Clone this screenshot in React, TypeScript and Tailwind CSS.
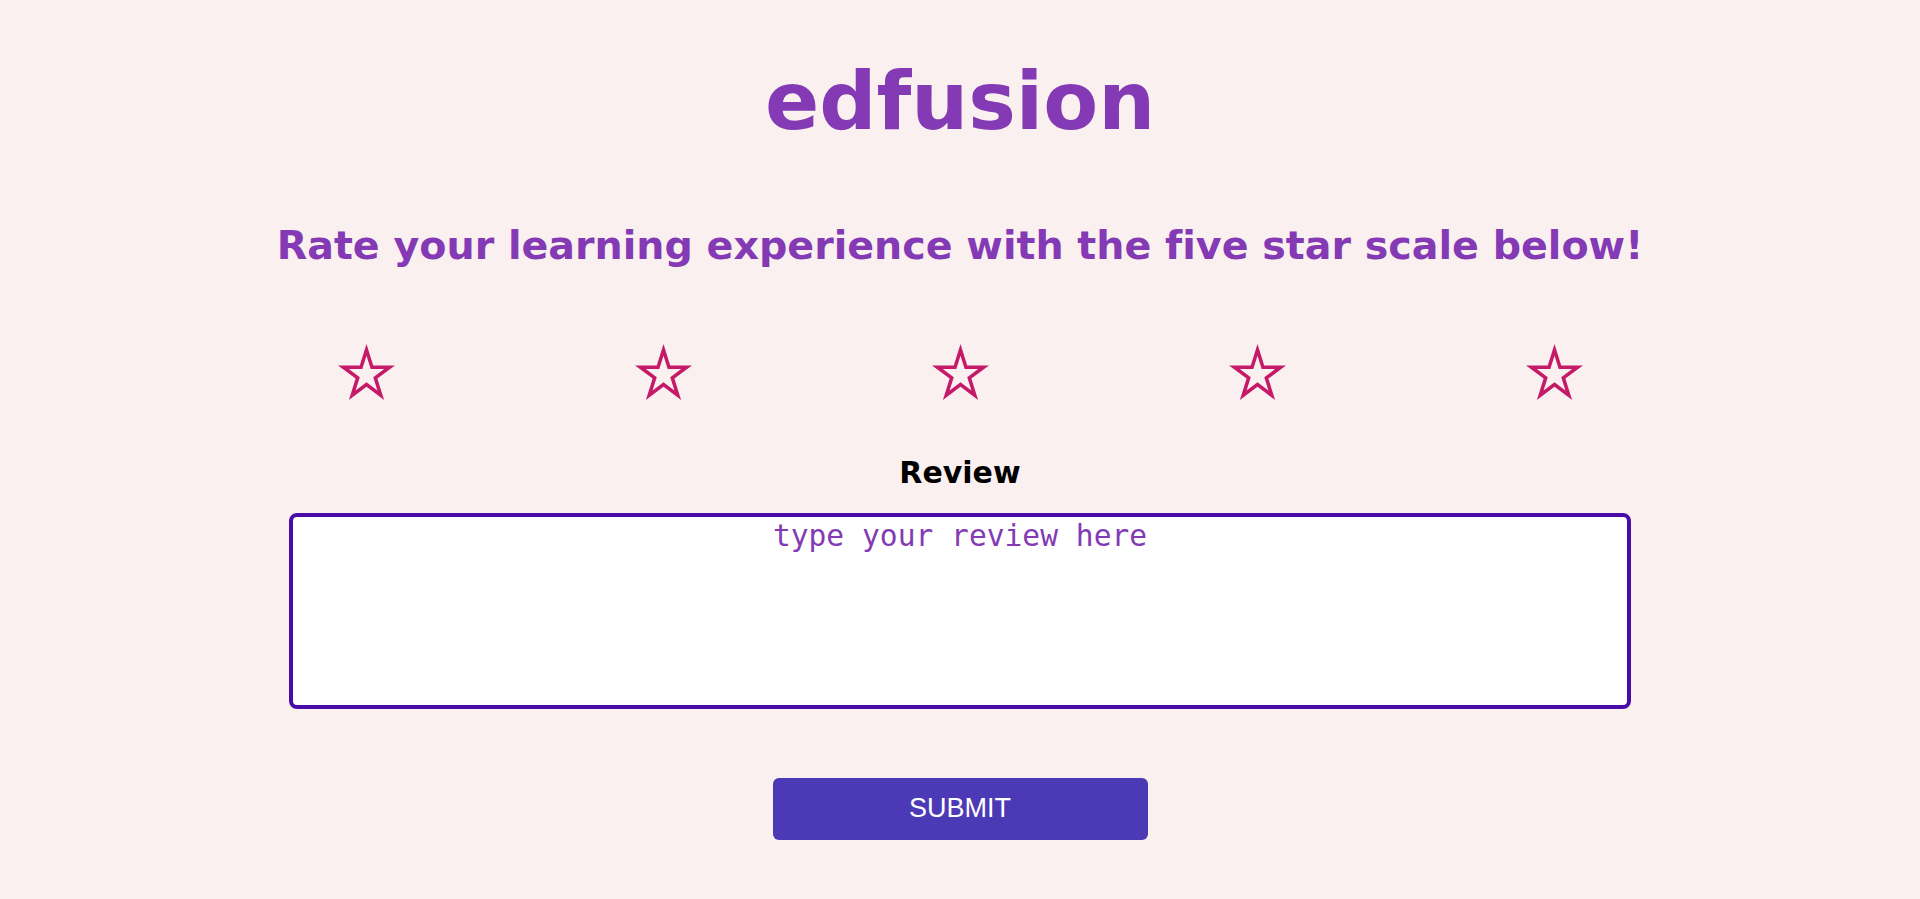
import { useState } from "react"

const stars = [1, 2, 3, 4, 5]

// hollow five-point star, outer outline minus inner outline
function Star({ filled }: { filled: boolean }) {
  return (
    <svg width="57" height="56" viewBox="0 0 100 100" preserveAspectRatio="none">
      <path
        fillRule="evenodd"
        fill="#c41a68"
        d={
          "M50 0 L61.8 38.2 L100 38.2 L69.1 61.8 L80.9 100 L50 76.4 L19.1 100 L30.9 61.8 L0 38.2 L38.2 38.2 Z" +
          (filled
            ? ""
            : " M50 21.01 L42.68 44.69 L19 44.69 L38.16 59.32 L30.84 83.01 L50 68.37 L69.16 83.01 L61.84 59.32 L81 44.69 L57.32 44.69 Z")
        }
      />
    </svg>
  )
}

export default function App() {
  const [rating, setRating] = useState(0)
  const [review, setReview] = useState("")

  return (
    <div className="min-h-screen bg-[#faf0ef] flex flex-col items-center font-['DejaVu_Sans',sans-serif] [font-variant-ligatures:none]">
      <h1 className="mt-[54px] text-[80px] leading-[1.2] font-bold text-[#833ab4]">edfusion</h1>

      <h2 className="mt-[72px] text-[39.6px] leading-[1.2] font-bold text-[#833ab4]">
        Rate your learning experience with the five star scale below!
      </h2>

      {/* stars */}
      <div className="mt-[74px] w-[1485px] flex justify-around">
        {stars.map((n) => (
          <button key={n} onClick={() => setRating(n)} className="cursor-pointer">
            <Star filled={n <= rating} />
          </button>
        ))}
      </div>

      <label htmlFor="review" className="mt-[55px] text-[30px] leading-[1.2] font-bold text-black">
        Review
      </label>
      <textarea
        id="review"
        value={review}
        onChange={(e) => setReview(e.target.value)}
        placeholder="type your review here"
        className="mt-[22px] w-[1342px] h-[196px] bg-white border-4 border-[#4a0ca8] rounded-lg resize-none text-center text-[29.6px] leading-[1.2] font-['DejaVu_Sans_Mono',monospace] text-[#833ab4] placeholder:text-[#833ab4] outline-none pt-[2px]"
      />

      <button className="mt-[69px] w-[375px] h-[62px] bg-[#4c39b5] rounded-md text-white text-[27px] font-['Liberation_Sans',Arial,sans-serif]">
        SUBMIT
      </button>
    </div>
  )
}
